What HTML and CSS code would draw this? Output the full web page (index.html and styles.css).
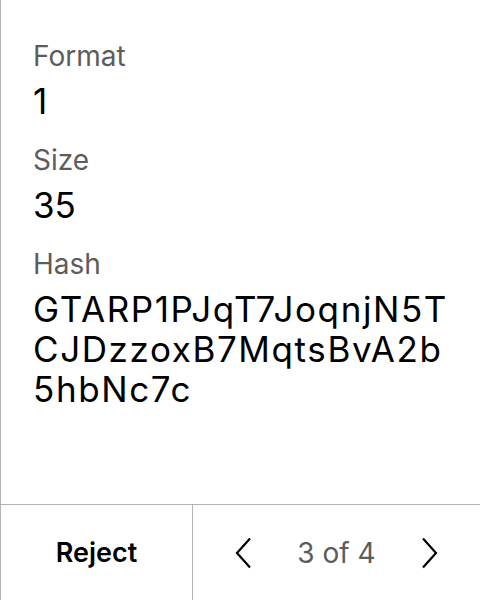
FILE: index.html
```html
<!DOCTYPE html>
<html>
<head>
<meta charset="utf-8">
<link rel="stylesheet" href="styles.css">
</head>
<body>
<div class="panel">
  <div class="details">
    <div class="field">
      <div class="label">Format</div>
      <div class="value">1</div>
    </div>
    <div class="field">
      <div class="label">Size</div>
      <div class="value">35</div>
    </div>
    <div class="field">
      <div class="label">Hash</div>
      <div class="value hash">GTARP1PJqT7JoqnjN5TCJDzzoxB7MqtsBvA2b5hbNc7c</div>
    </div>
  </div>
  <div class="footer">
    <div class="reject">Reject</div>
    <div class="pager">
      <svg class="chev" width="16" height="32" viewBox="0 0 16 32"><path d="M15 1.5 L2 16 L15 30.5" fill="none" stroke="#000" stroke-width="2.2"/></svg>
      <span class="count">3 of 4</span>
      <svg class="chev" width="16" height="32" viewBox="0 0 16 32"><path d="M1 1.5 L14 16 L1 30.5" fill="none" stroke="#000" stroke-width="2.2"/></svg>
    </div>
  </div>
</div>
</body>
</html>
```
FILE: styles.css
```css
html, body {
  margin: 0;
  padding: 0;
  background: #fff;
}
body {
  font-family: Inter, "Noto Sans", sans-serif;
  color: #000;
}
.panel {
  width: 480px;
  height: 600px;
  box-sizing: border-box;
  border-left: 1px solid #b3b3b3;
  display: flex;
  flex-direction: column;
}
.details {
  flex: 1;
  padding: 40px 16px 0 32px;
  display: flex;
  flex-direction: column;
  gap: 23px;
}
.field {
  display: flex;
  flex-direction: column;
  gap: 9px;
}
.label {
  font-size: 28px;
  line-height: 32px;
  color: #5c5c5c;
}
.value {
  font-size: 35px;
  line-height: 40px;
  color: #000;
}
.hash {
  word-break: break-all;
  letter-spacing: 1.6px;
  width: 422px;
}
.footer {
  height: 95px;
  border-top: 1px solid #b3b3b3;
  display: flex;
}
.reject {
  width: 191px;
  border-right: 1px solid #b3b3b3;
  display: flex;
  align-items: center;
  justify-content: center;
  font-size: 27px;
  font-weight: 600;
}
.pager {
  flex: 1;
  display: flex;
  align-items: center;
  justify-content: space-between;
  padding: 0 42px;
}
.count {
  font-size: 28px;
  color: #5c5c5c;
}
.chev {
  display: block;
}
```
